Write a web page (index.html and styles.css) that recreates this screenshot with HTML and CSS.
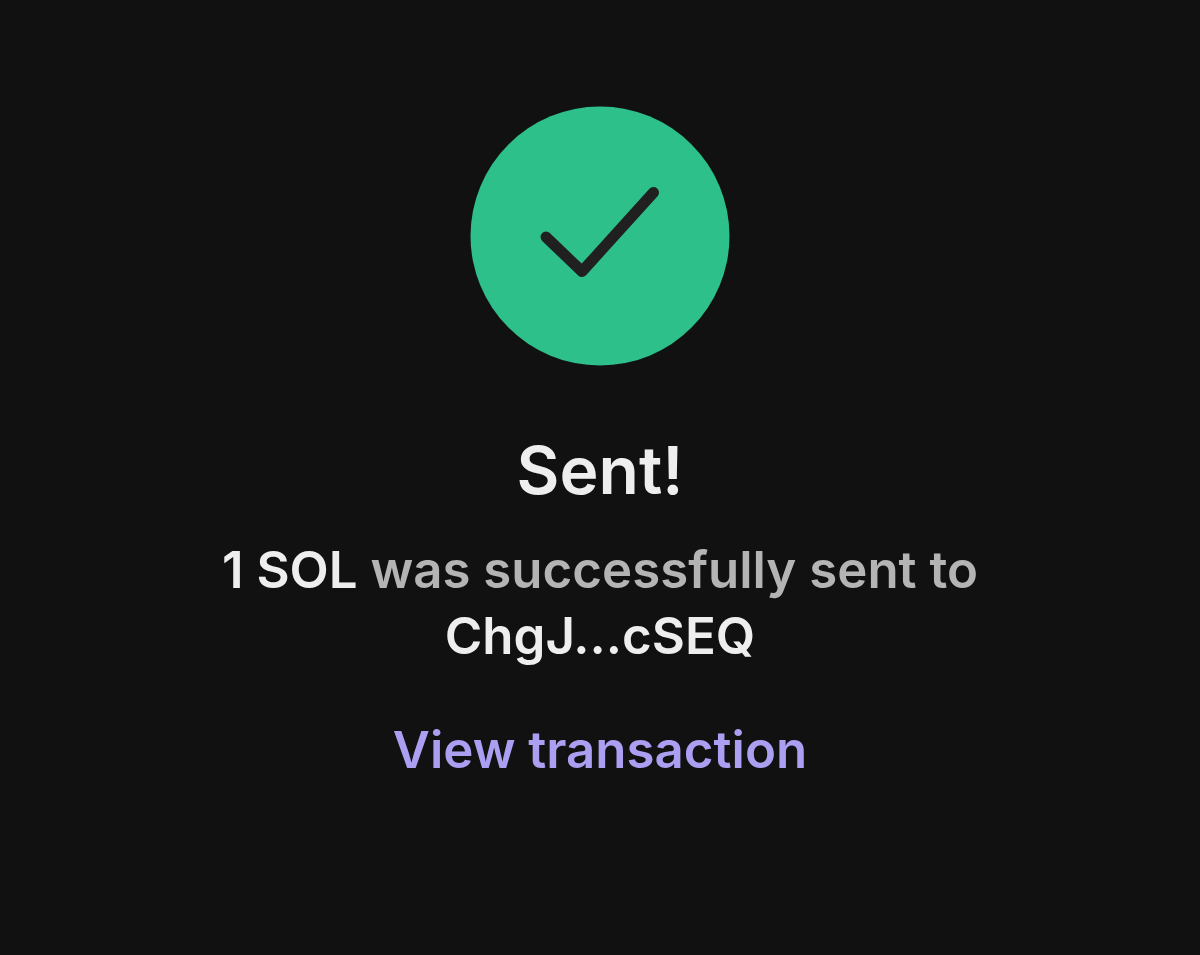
FILE: index.html
```html
<!DOCTYPE html>
<html lang="en">
<head>
    <meta charset="UTF-8">
    <meta name="viewport" content="width=device-width, initial-scale=1.0">
    <title>Sent</title>
    <link rel="stylesheet" href="styles.css">
</head>
<body>
    <main class="success">
        <svg class="success-icon" viewBox="0 0 260 260" aria-hidden="true">
            <circle cx="130" cy="130" r="129.5" fill="#2ec08b"/>
            <path d="M76 131L112 165.500L183.500 86.500" fill="none" stroke="#202020" stroke-width="11" stroke-linecap="round" stroke-linejoin="round"/>
        </svg>
        <h1 class="success-title">Sent!</h1>
        <p class="success-text"><strong>1 SOL</strong> was successfully sent to <strong>ChgJ...cSEQ</strong></p>
        <a class="success-link" href="#">View transaction</a>
    </main>
</body>
</html>
```
FILE: styles.css
```css
body {
    margin: 0;
    background-color: #111;
    font-family: Inter, sans-serif;
    font-weight: 600;
}

.success {
    display: flex;
    flex-direction: column;
    align-items: center;
    padding: 106px 32px;
    text-align: center;
}

.success-icon {
    width: 260px;
    height: 260px;
}

.success-title {
    margin: 64px 0 27px;
    color: #eee;
    font-size: 66px;
    font-weight: 600;
    line-height: 80px;
}

.success-text {
    max-width: 800px;
    margin: 0;
    color: #b4b4b4;
    font-size: 51px;
    line-height: 66px;
}

.success-text strong {
    color: #eee;
    font-weight: 600;
}

.success-link {
    margin-top: 48px;
    color: #ab9ff2;
    font-size: 51px;
    line-height: 66px;
    text-decoration: none;
}
```
